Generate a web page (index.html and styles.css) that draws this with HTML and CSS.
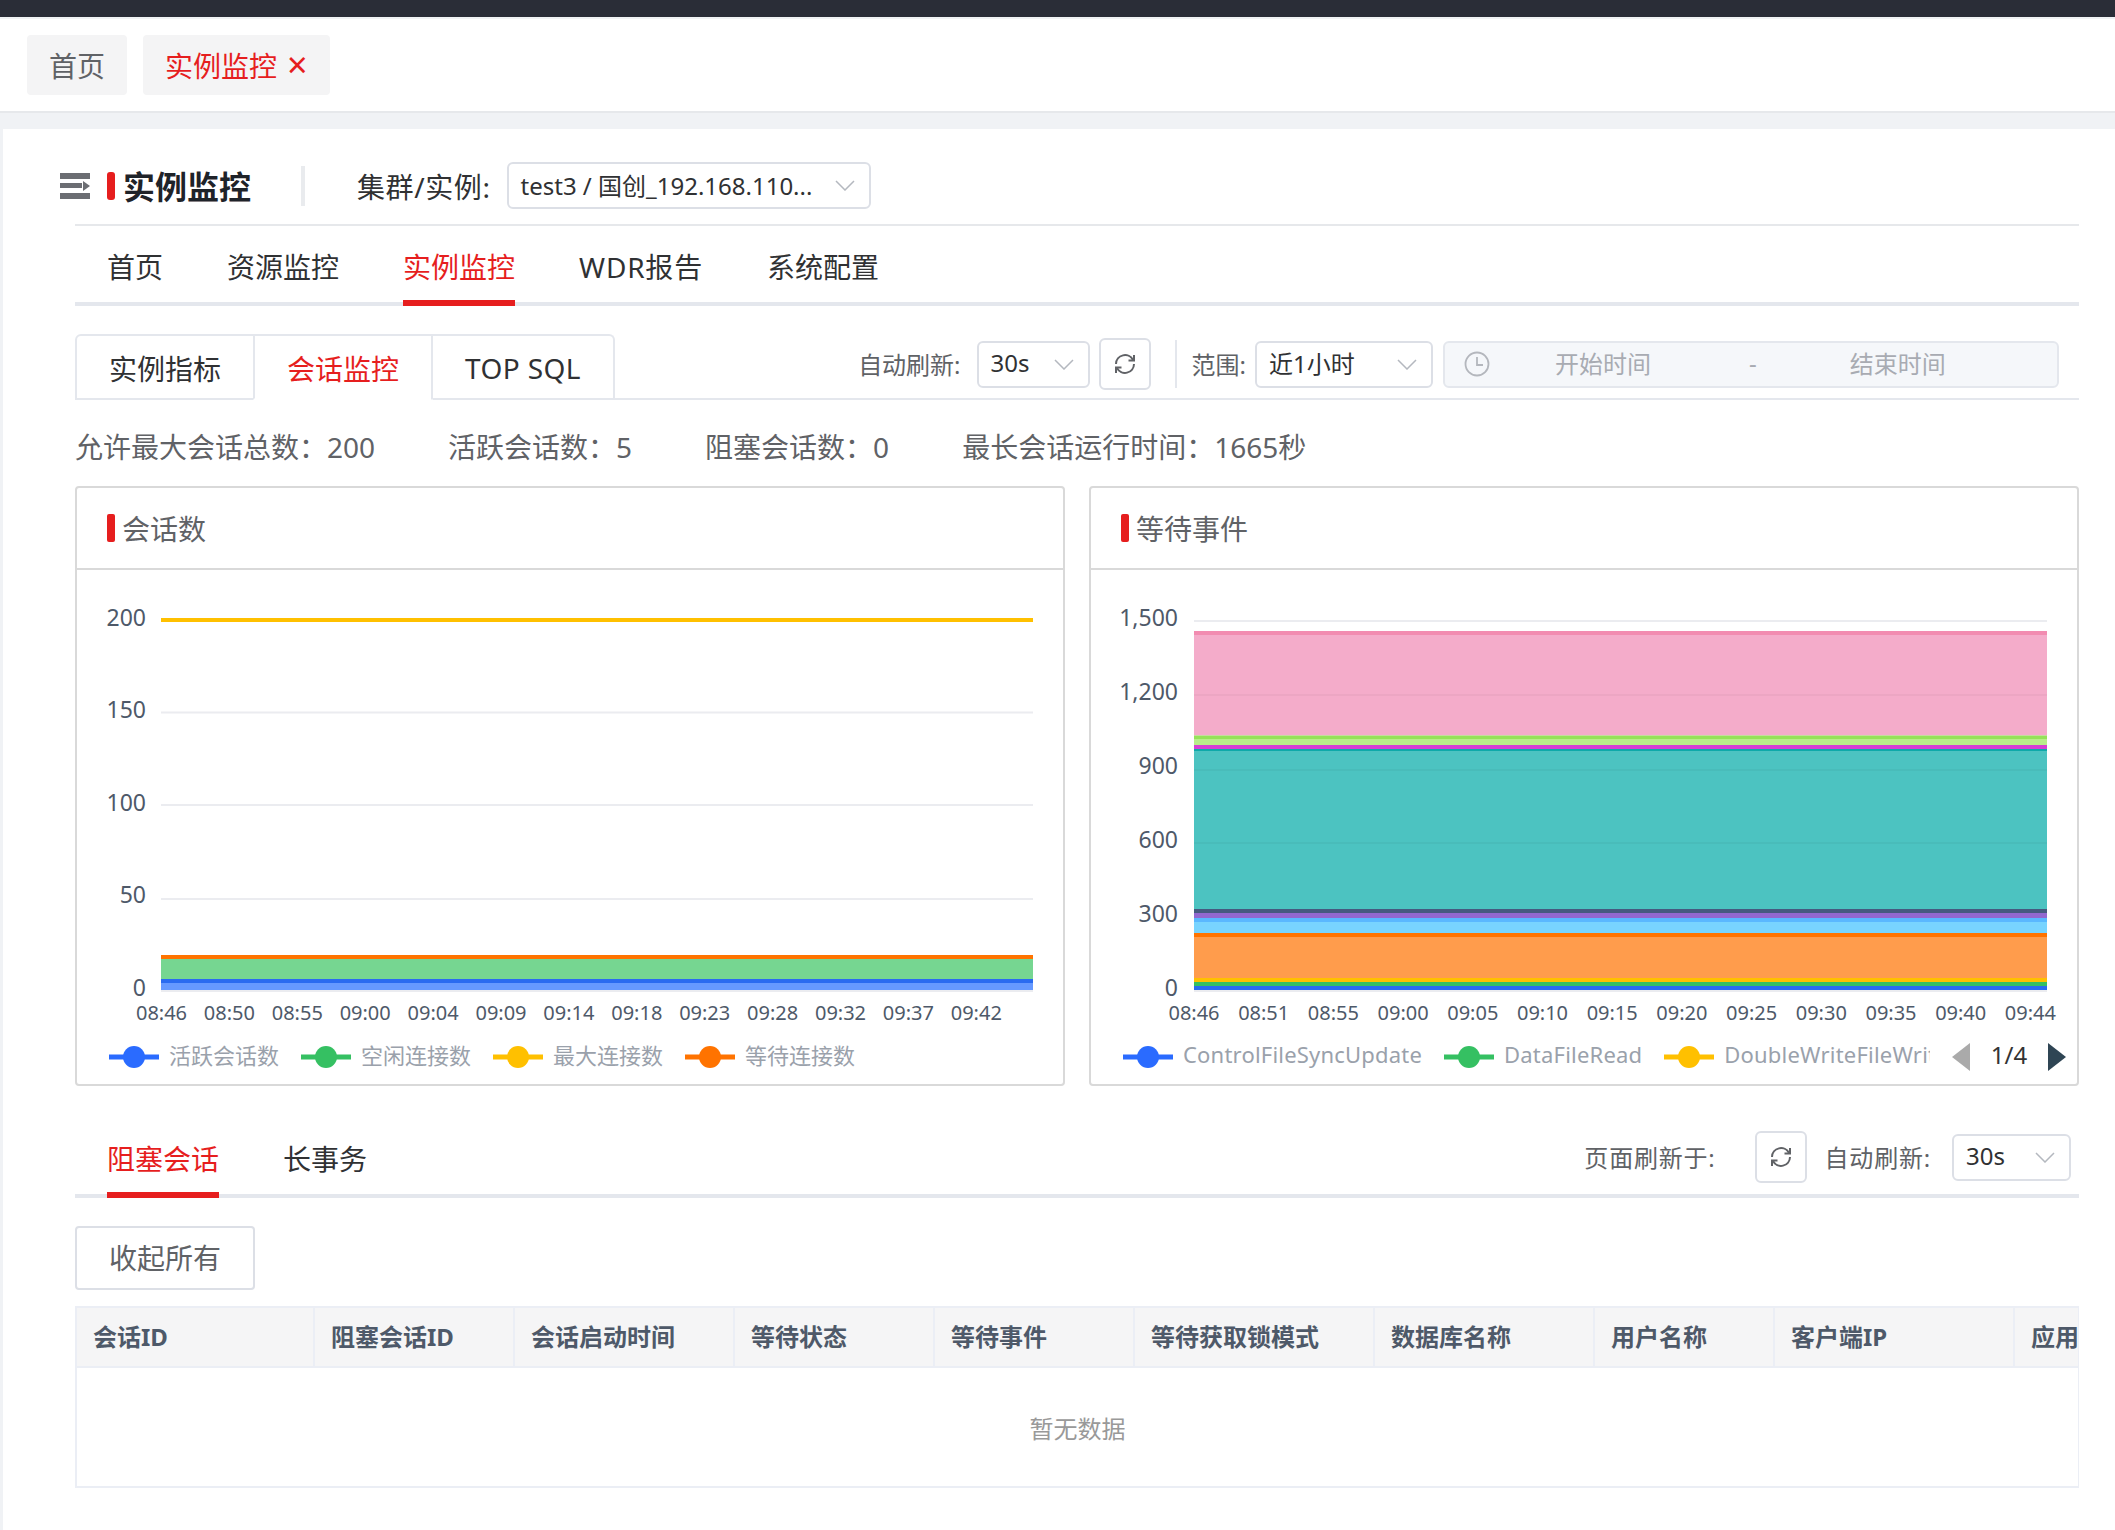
FILE: index.html
```html
<!DOCTYPE html>
<html lang="zh-CN">
<head>
    <meta charset="UTF-8">
    <title>实例监控</title>
    <link rel="stylesheet" href="styles.css">
</head>
<body>
    <div class="topbar"></div>
    <div class="tagbar">
        <div class="tag">首页</div>
        <div class="tag tag-active">实例监控<span class="tag-close">×</span></div>
    </div>

    <div class="main">
        <div class="page-head">
            <svg class="menu-icon" width="30" height="26" viewBox="0 0 30 26" fill="#6b6d72">
                <path d="M0 0h30v6H0zM0 10h22v5H0zM0 20h30v6H0z"/>
                <path d="M23 8l7 5-7 5z"/>
            </svg>
            <h1 class="page-title">实例监控</h1>
            <span class="head-divider"></span>
            <span class="head-label">集群/实例:</span>
            <div class="select select-cluster">
                <span class="select-text">test3 / 国创_192.168.110...</span>
                <svg class="chevron" width="20" height="11" viewBox="0 0 20 11"><path d="M1 1l9 9 9-9" fill="none" stroke="#b4b8bf" stroke-width="1.500"/></svg>
            </div>
        </div>

        <div class="nav">
            <div class="nav-item">首页</div>
            <div class="nav-item">资源监控</div>
            <div class="nav-item active">实例监控</div>
            <div class="nav-item nav-wdr">WDR报告</div>
            <div class="nav-item">系统配置</div>
        </div>

        <div class="sub-row">
            <div class="card-tab">实例指标</div>
            <div class="card-tab active">会话监控</div>
            <div class="card-tab tab-sql">TOP SQL</div>
            <div class="controls">
                <span class="ctl-label">自动刷新:</span>
                <div class="select select-30s">
                    <span class="select-text">30s</span>
                    <svg class="chevron" width="20" height="11" viewBox="0 0 20 11"><path d="M1 1l9 9 9-9" fill="none" stroke="#b4b8bf" stroke-width="1.500"/></svg>
                </div>
                <div class="icon-btn">
                    <svg width="24" height="24" viewBox="0 0 24 24" fill="none" stroke="#606266" stroke-width="2">
                        <path d="M3 12A9 9 0 0 1 20 8"/><path d="M21 3V8.500H15.500"/>
                        <path d="M21 12A9 9 0 0 1 4 16"/><path d="M3 21V15.500H8.500"/>
                    </svg>
                </div>
                <span class="ctl-divider"></span>
                <span class="ctl-label">范围:</span>
                <div class="select select-range">
                    <span class="select-text">近1小时</span>
                    <svg class="chevron" width="20" height="11" viewBox="0 0 20 11"><path d="M1 1l9 9 9-9" fill="none" stroke="#b4b8bf" stroke-width="1.500"/></svg>
                </div>
                <div class="date-range">
                    <svg width="26" height="26" viewBox="0 0 26 26" fill="none" stroke="#b4b7bd" stroke-width="1.800"><circle cx="13" cy="13" r="11.500"/><path d="M13 6v8h6"/></svg>
                    <span class="date-text date-start">开始时间</span>
                    <span class="date-text date-sep">-</span>
                    <span class="date-text date-end">结束时间</span>
                </div>
            </div>
        </div>

        <div class="stats">
            <span>允许最大会话总数：200</span>
            <span>活跃会话数：5</span>
            <span>阻塞会话数：0</span>
            <span>最长会话运行时间：1665秒</span>
        </div>

        <div class="charts">
            <div class="card">
                <div class="card-head">会话数</div>
                <svg class="chart" width="986" height="464" viewBox="77 570 986 464">
                    <g class="grid">
                        <rect x="161" y="711.500" width="872" height="2"/>
                        <rect x="161" y="804" width="872" height="2"/>
                        <rect x="161" y="898" width="872" height="2"/>
                        <rect x="161" y="990" width="872" height="2"/>
                    </g>
                    <rect x="161" y="618" width="872" height="4" fill="#ffc000"/>
                    <rect x="161" y="955" width="872" height="4" fill="#ff7300"/>
                    <rect x="161" y="959" width="872" height="20" fill="#76d691"/>
                    <rect x="161" y="979" width="872" height="4" fill="#2a6bf0"/>
                    <rect x="161" y="983" width="872" height="7" fill="#6699ff"/>
                    <g class="y-label">
                        <text x="146" y="626">200</text>
                        <text x="146" y="718">150</text>
                        <text x="146" y="811">100</text>
                        <text x="146" y="903">50</text>
                        <text x="146" y="996">0</text>
                    </g>
                    <g class="x-label">
                        <text x="161.500" y="1020">08:46</text>
                        <text x="229.400" y="1020">08:50</text>
                        <text x="297.300" y="1020">08:55</text>
                        <text x="365.200" y="1020">09:00</text>
                        <text x="433.100" y="1020">09:04</text>
                        <text x="501" y="1020">09:09</text>
                        <text x="568.900" y="1020">09:14</text>
                        <text x="636.800" y="1020">09:18</text>
                        <text x="704.700" y="1020">09:23</text>
                        <text x="772.600" y="1020">09:28</text>
                        <text x="840.500" y="1020">09:32</text>
                        <text x="908.400" y="1020">09:37</text>
                        <text x="976.300" y="1020">09:42</text>
                    </g>
                </svg>
                <div class="legend">
                    <div class="legend-list">
                        <div class="legend-item"><svg class="mark" width="50" height="24" viewBox="0 0 50 24"><rect y="9.500" width="50" height="5" fill="#2a6bff"/><circle cx="25" cy="12" r="11" fill="#2a6bff"/></svg><span class="legend-text">活跃会话数</span></div>
                        <div class="legend-item"><svg class="mark" width="50" height="24" viewBox="0 0 50 24"><rect y="9.500" width="50" height="5" fill="#35c062"/><circle cx="25" cy="12" r="11" fill="#35c062"/></svg><span class="legend-text">空闲连接数</span></div>
                        <div class="legend-item"><svg class="mark" width="50" height="24" viewBox="0 0 50 24"><rect y="9.500" width="50" height="5" fill="#ffc000"/><circle cx="25" cy="12" r="11" fill="#ffc000"/></svg><span class="legend-text">最大连接数</span></div>
                        <div class="legend-item"><svg class="mark" width="50" height="24" viewBox="0 0 50 24"><rect y="9.500" width="50" height="5" fill="#ff7300"/><circle cx="25" cy="12" r="11" fill="#ff7300"/></svg><span class="legend-text">等待连接数</span></div>
                    </div>
                </div>
            </div>

            <div class="card">
                <div class="card-head">等待事件</div>
                <svg class="chart" width="986" height="464" viewBox="1091 570 986 464">
                    <g class="grid">
                        <rect x="1194" y="620" width="853" height="2"/>
                        <rect x="1194" y="990" width="853" height="2"/>
                    </g>
                    <rect x="1194" y="631" width="853" height="4" fill="#f28cb1"/>
                    <rect x="1194" y="635" width="853" height="100.500" fill="#f4acca"/>
                    <rect x="1194" y="735.500" width="853" height="3.500" fill="#96e25a"/>
                    <rect x="1194" y="739" width="853" height="6" fill="#b9ee8b"/>
                    <rect x="1194" y="745" width="853" height="4" fill="#d63fd6"/>
                    <rect x="1194" y="749" width="853" height="2" fill="#0fa9a9"/>
                    <rect x="1194" y="751" width="853" height="158" fill="#4cc3c1"/>
                    <rect x="1194" y="909" width="853" height="4" fill="#465a80"/>
                    <rect x="1194" y="913" width="853" height="5" fill="#9268d0"/>
                    <rect x="1194" y="918" width="853" height="4" fill="#5ab8ff"/>
                    <rect x="1194" y="922" width="853" height="11" fill="#78d4ff"/>
                    <rect x="1194" y="933" width="853" height="4" fill="#ff7300"/>
                    <rect x="1194" y="937" width="853" height="41" fill="#ff9c4c"/>
                    <rect x="1194" y="978" width="853" height="4" fill="#ffc000"/>
                    <rect x="1194" y="982" width="853" height="4" fill="#35c062"/>
                    <rect x="1194" y="986" width="853" height="4" fill="#2a6bf0"/>
                    <g class="grid-over">
                        <rect x="1194" y="694" width="853" height="2"/>
                        <rect x="1194" y="769" width="853" height="2"/>
                        <rect x="1194" y="842" width="853" height="2"/>
                    </g>
                    <g class="y-label">
                        <text x="1178" y="626">1,500</text>
                        <text x="1178" y="700">1,200</text>
                        <text x="1178" y="774">900</text>
                        <text x="1178" y="848">600</text>
                        <text x="1178" y="922">300</text>
                        <text x="1178" y="996">0</text>
                    </g>
                    <g class="x-label">
                        <text x="1194" y="1020">08:46</text>
                        <text x="1263.700" y="1020">08:51</text>
                        <text x="1333.400" y="1020">08:55</text>
                        <text x="1403.100" y="1020">09:00</text>
                        <text x="1472.800" y="1020">09:05</text>
                        <text x="1542.500" y="1020">09:10</text>
                        <text x="1612.200" y="1020">09:15</text>
                        <text x="1681.900" y="1020">09:20</text>
                        <text x="1751.600" y="1020">09:25</text>
                        <text x="1821.300" y="1020">09:30</text>
                        <text x="1891" y="1020">09:35</text>
                        <text x="1960.700" y="1020">09:40</text>
                        <text x="2030.400" y="1020">09:44</text>
                    </g>
                </svg>
                <div class="legend">
                    <div class="legend-list legend-clip">
                        <div class="legend-item"><svg class="mark" width="50" height="24" viewBox="0 0 50 24"><rect y="9.500" width="50" height="5" fill="#2a6bff"/><circle cx="25" cy="12" r="11" fill="#2a6bff"/></svg><span class="legend-text">ControlFileSyncUpdate</span></div>
                        <div class="legend-item"><svg class="mark" width="50" height="24" viewBox="0 0 50 24"><rect y="9.500" width="50" height="5" fill="#35c062"/><circle cx="25" cy="12" r="11" fill="#35c062"/></svg><span class="legend-text">DataFileRead</span></div>
                        <div class="legend-item"><svg class="mark" width="50" height="24" viewBox="0 0 50 24"><rect y="9.500" width="50" height="5" fill="#ffc000"/><circle cx="25" cy="12" r="11" fill="#ffc000"/></svg><span class="legend-text">DoubleWriteFileWrite</span></div>
                    </div>
                    <div class="pager">
                        <span class="arrow arrow-left"></span>
                        <span class="pager-text">1/4</span>
                        <span class="arrow arrow-right"></span>
                    </div>
                </div>
            </div>
        </div>

        <div class="bottom-tabs">
            <div class="bottom-tab active">阻塞会话</div>
            <div class="bottom-tab">长事务</div>
            <div class="controls bottom-controls">
                <span class="ctl-label">页面刷新于:</span>
                <div class="icon-btn">
                    <svg width="24" height="24" viewBox="0 0 24 24" fill="none" stroke="#606266" stroke-width="2">
                        <path d="M3 12A9 9 0 0 1 20 8"/><path d="M21 3V8.500H15.500"/>
                        <path d="M21 12A9 9 0 0 1 4 16"/><path d="M3 21V15.500H8.500"/>
                    </svg>
                </div>
                <span class="ctl-label">自动刷新:</span>
                <div class="select select-30s select-bottom">
                    <span class="select-text">30s</span>
                    <svg class="chevron" width="20" height="11" viewBox="0 0 20 11"><path d="M1 1l9 9 9-9" fill="none" stroke="#b4b8bf" stroke-width="1.500"/></svg>
                </div>
            </div>
        </div>

        <button class="collapse-btn">收起所有</button>

        <div class="table-wrap">
            <table class="data-table">
                <colgroup>
                    <col class="w-237"><col class="w-200"><col class="w-220"><col class="w-200"><col class="w-200">
                    <col class="w-240"><col class="w-220"><col class="w-180"><col class="w-240"><col class="w-200">
                </colgroup>
                <thead>
                    <tr>
                        <th>会话ID</th><th>阻塞会话ID</th><th>会话启动时间</th><th>等待状态</th><th>等待事件</th>
                        <th>等待获取锁模式</th><th>数据库名称</th><th>用户名称</th><th>客户端IP</th><th>应用名称</th>
                    </tr>
                </thead>
            </table>
            <div class="empty">暂无数据</div>
        </div>
    </div>
</body>
</html>
```

FILE: styles.css
```css
* {
    box-sizing: border-box;
}

body {
    margin: 0;
    background-color: #f0f2f5;
    font-family: "Noto Sans", "Noto Sans CJK SC", sans-serif;
    color: #303133;
    height: 1530px;
    overflow: hidden;
}

.topbar {
    height: 17px;
    background-color: #2a2d37;
}

.tagbar {
    display: flex;
    gap: 16px;
    height: 96px;
    padding: 16px 27px 0;
    background-color: #fff;
    border-top: 2px solid #f0f2f5;
    border-bottom: 2px solid #e6e8eb;
}

.tag {
    height: 60px;
    padding: 0 22px;
    display: flex;
    align-items: center;
    font-size: 28px;
    color: #606266;
    background-color: #f4f4f5;
    border-radius: 4px;
}

.tag-active {
    color: #e61e1e;
}

.tag-close {
    margin-left: 10px;
    font-size: 36px;
    line-height: 36px;
}

.main {
    margin: 16px 0 0 3px;
    height: 1401px;
    padding: 33px 36px 0 72px;
    background-color: #fff;
}

/* page header */
.page-head {
    display: flex;
    align-items: center;
    height: 47px;
    margin: 0 0 15px -15px;
}

.menu-icon {
    margin-right: 17px;
}

.page-title {
    display: flex;
    align-items: center;
    margin: 2px 0 0;
    font-size: 32px;
    line-height: 32px;
    color: #1f2329;
}

.page-title::before {
    content: "";
    width: 8px;
    height: 28px;
    margin: -2px 8px 0 0;
    background-color: #e61e1e;
    border-radius: 3px;
}

.head-divider {
    width: 4px;
    height: 40px;
    margin: 0 52px 0 50px;
    background-color: #e9ebee;
}

.head-label {
    font-size: 28px;
    letter-spacing: 0.6px;
    color: #303133;
    margin-right: 16px;
}

.select {
    display: flex;
    align-items: center;
    justify-content: space-between;
    height: 47px;
    padding: 0 14px 0 12px;
    background-color: #fff;
    border: 2px solid #dcdfe6;
    border-radius: 6px;
    font-size: 24px;
    color: #303133;
}

.select-text {
    padding-bottom: 3px;
}

.select-cluster {
    width: 364px;
}

.select-30s {
    width: 113px;
}

.select-range {
    width: 178px;
}

.select-bottom {
    width: 119px;
}

/* main nav */
.nav {
    display: flex;
    gap: 64px;
    height: 82px;
    padding-left: 32px;
    border-top: 2px solid #e6e8eb;
    border-bottom: 4px solid #e4e7ed;
}

.nav-item {
    display: flex;
    align-items: center;
    height: 80px;
    padding-top: 6px;
    font-size: 28px;
    border-bottom: 6px solid transparent;
}

.nav-wdr {
    letter-spacing: 0.8px;
}

.nav-item.active {
    color: #e61e1e;
    border-bottom-color: #e61e1e;
}

/* card tabs and the controls beside them */
.sub-row {
    display: flex;
    align-items: flex-start;
    height: 66px;
    margin-top: 28px;
    border-bottom: 2px solid #e4e7ed;
}

.card-tab {
    display: flex;
    align-items: center;
    height: 66px;
    padding: 2px 32px 0;
    font-size: 28px;
    border: 2px solid #e4e7ed;
    margin-left: -2px;
}

.card-tab:first-child {
    margin-left: 0;
    border-radius: 6px 0 0 0;
}

.tab-sql {
    letter-spacing: 0.4px;
    border-radius: 0 6px 0 0;
    border-bottom-color: transparent;
}

.card-tab.active {
    color: #e61e1e;
    border-bottom-color: #fff;
}

.controls {
    display: flex;
    align-items: center;
    margin: 4px 20px 0 auto;
}

.ctl-label {
    padding-bottom: 2px;
    font-size: 24px;
    color: #606266;
    margin-right: 16px;
}

.icon-btn {
    display: flex;
    align-items: center;
    justify-content: center;
    width: 52px;
    height: 52px;
    margin-left: 9px;
    border: 2px solid #dcdfe6;
    border-radius: 6px;
}

.ctl-divider {
    width: 2px;
    height: 48px;
    margin: 0 15px 0 24px;
    background-color: #e4e7ed;
}

.controls .ctl-divider + .ctl-label {
    margin-right: 9px;
}

.date-range {
    display: flex;
    align-items: center;
    width: 616px;
    height: 47px;
    margin-left: 10px;
    padding-left: 19px;
    background-color: #f5f7fa;
    border: 2px solid #e4e7ed;
    border-radius: 6px;
}

.date-text {
    padding-bottom: 3px;
    font-size: 24px;
    color: #a8abb2;
}

.date-start {
    margin-left: 65px;
}

.date-sep {
    margin-left: 98px;
}

.date-end {
    margin-left: 93px;
}

.stats {
    display: flex;
    gap: 73px;
    margin-top: 27px;
    font-size: 28px;
    line-height: 40px;
    color: #606266;
}

/* chart cards */
.charts {
    display: grid;
    grid-template-columns: 990px 990px;
    gap: 24px;
    margin-top: 19px;
}

.card {
    height: 600px;
    background-color: #fff;
    border: 2px solid #d9d9d9;
    border-radius: 4px;
}

.card-head {
    display: flex;
    align-items: center;
    height: 82px;
    padding-left: 30px;
    font-size: 28px;
    color: #606266;
    border-bottom: 2px solid #d9d9d9;
}

.card-head::before {
    content: "";
    width: 8px;
    height: 28px;
    margin-right: 7px;
    background-color: #e61e1e;
    border-radius: 2px;
}

.chart {
    display: block;
}

.grid rect {
    fill: #ebecf0;
}

.grid-over rect {
    fill: rgba(0, 0, 0, 0.03);
}

.y-label text {
    font-size: 23px;
    fill: #4e5969;
    text-anchor: end;
}

.x-label text {
    font-size: 20px;
    fill: #4e5969;
    text-anchor: middle;
}

.legend {
    display: flex;
    align-items: center;
    height: 46px;
    padding-left: 32px;
}

.legend-list {
    display: flex;
    gap: 22px;
    overflow: hidden;
}

.legend-clip {
    width: 807px;
    letter-spacing: 0.2px;
}

.legend-item {
    display: flex;
    flex-shrink: 0;
    align-items: center;
    font-size: 22px;
    color: #9aa1ab;
    white-space: nowrap;
}

.legend-text {
    padding-bottom: 6px;
}

.mark {
    margin-right: 10px;
}

.pager {
    display: flex;
    align-items: center;
    margin-left: 22px;
}

.pager-text {
    width: 78px;
    padding-bottom: 6px;
    text-align: center;
    font-size: 24px;
    color: #333;
}

.arrow {
    width: 0;
    height: 0;
    border-top: 14px solid transparent;
    border-bottom: 14px solid transparent;
}

.arrow-left {
    border-right: 18px solid #aaa;
}

.arrow-right {
    border-left: 18px solid #2f4554;
}

/* lower tabs */
.bottom-tabs {
    display: flex;
    height: 112px;
    padding-left: 32px;
    gap: 64px;
    border-bottom: 4px solid #e4e7ed;
}

.bottom-tab {
    display: flex;
    align-items: center;
    height: 112px;
    padding-top: 38px;
    font-size: 28px;
    border-bottom: 6px solid transparent;
}

.bottom-tab.active {
    color: #e61e1e;
    border-bottom-color: #e61e1e;
}

.bottom-controls {
    margin: auto 8px 11px auto;
}

.bottom-controls .ctl-label {
    letter-spacing: 0.8px;
    margin-right: 21px;
}

.bottom-controls .ctl-label:first-child {
    margin-right: 39px;
}

.bottom-controls .icon-btn {
    margin: 0 18px 0 0;
}

.collapse-btn {
    display: block;
    width: 180px;
    height: 64px;
    margin-top: 28px;
    padding: 0 0 2px;
    font-family: inherit;
    font-size: 28px;
    color: #606266;
    background-color: #fff;
    border: 2px solid #dcdfe6;
    border-radius: 4px;
}

/* table */
.table-wrap {
    margin-top: 16px;
    overflow: hidden;
    border: 2px solid #ebeef5;
    border-right-width: 1px;
}

.data-table {
    width: 2137px;
    table-layout: fixed;
    border-collapse: collapse;
}

.w-237 { width: 237px; }
.w-200 { width: 200px; }
.w-220 { width: 220px; }
.w-240 { width: 240px; }
.w-180 { width: 180px; }

.data-table th {
    height: 58px;
    padding: 0 16px 4px;
    text-align: left;
    font-size: 24px;
    color: #4e5969;
    white-space: nowrap;
    background-color: #f5f5f6;
    border-right: 2px solid #ebeef5;
}

.empty {
    height: 120px;
    display: flex;
    align-items: center;
    justify-content: center;
    font-size: 24px;
    color: #999;
    border-top: 2px solid #ebeef5;
}
```
